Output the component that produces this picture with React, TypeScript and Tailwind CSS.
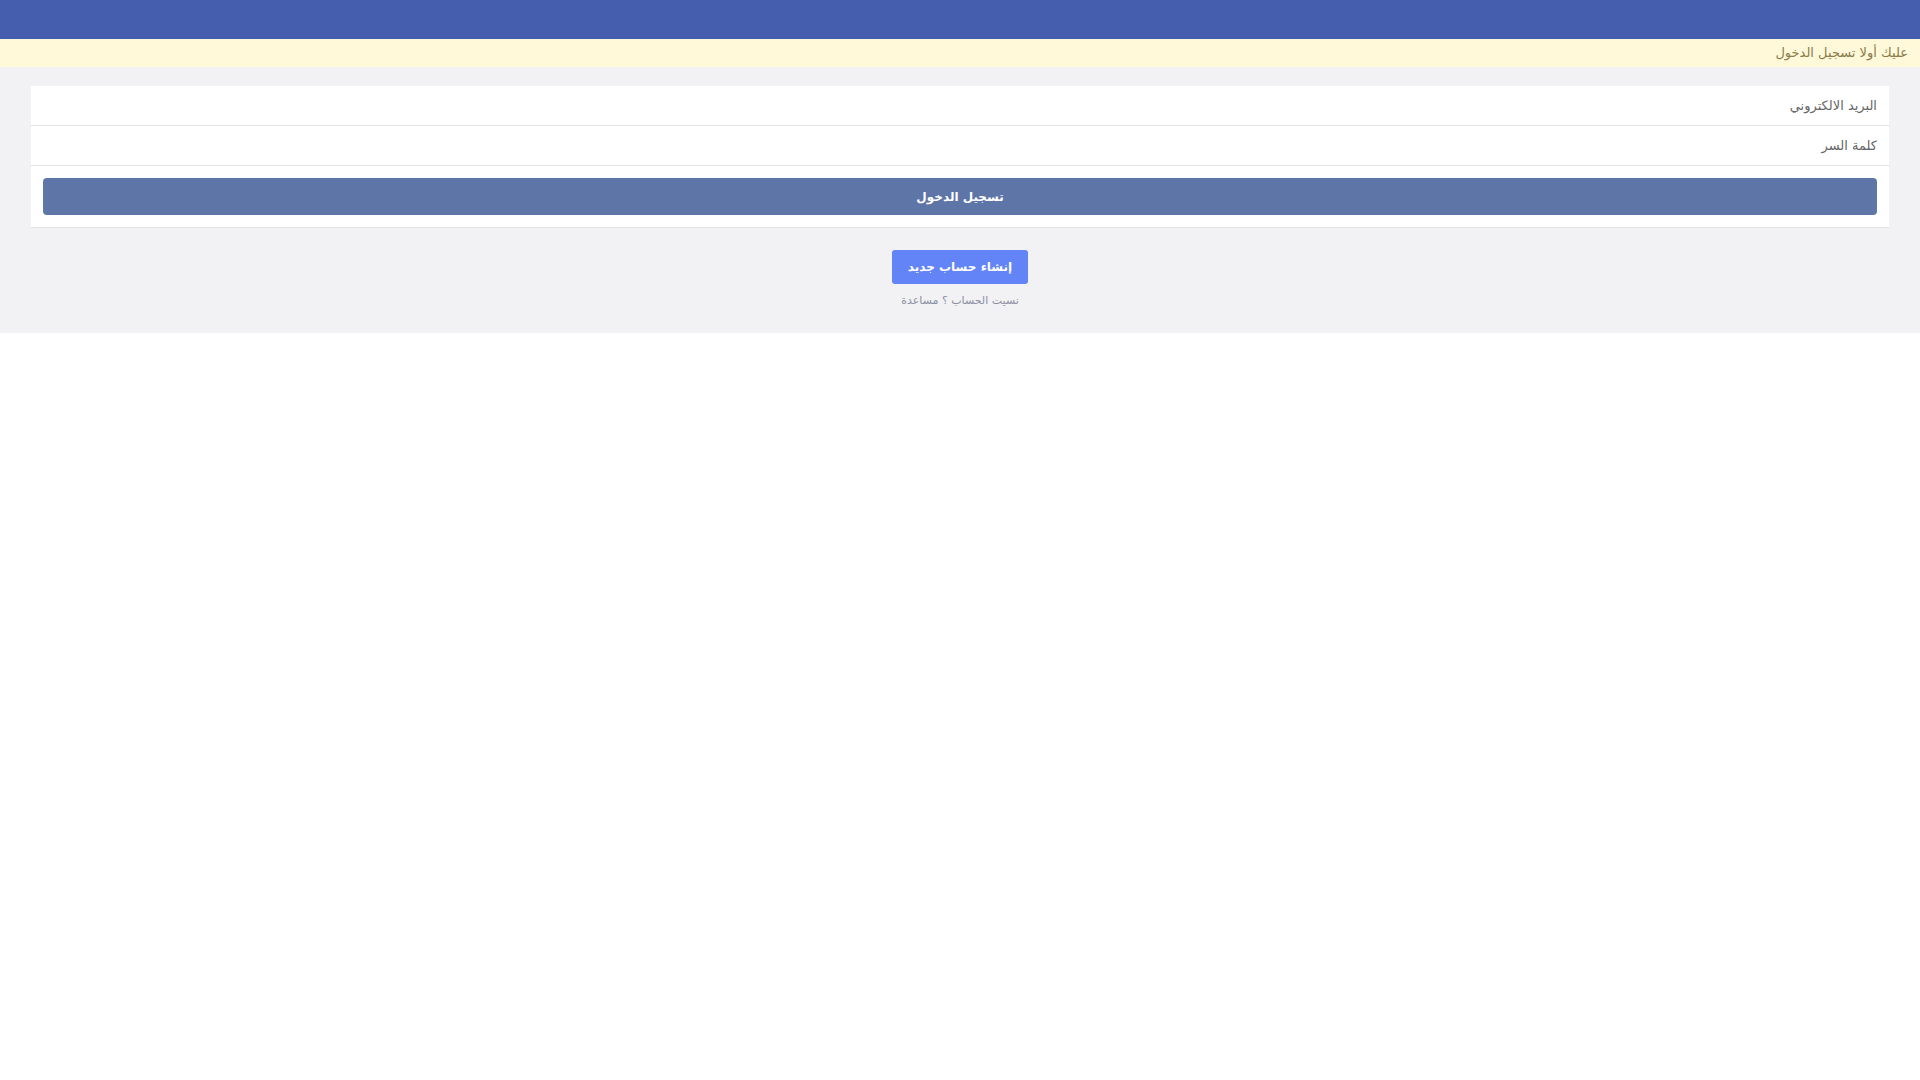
import React from "react";

export default function App() {
  return (
    <div dir="rtl" className="w-full" style={{ fontFamily: '"DejaVu Sans", "Noto Sans", sans-serif' }}>
      <div className="h-[39px] bg-[#465eae]" />
      <div className="h-[28px] bg-[#fff9d9] px-[12px] flex items-center text-[13px] text-[#8a7b4a]">
        عليك أولا تسجيل الدخول
      </div>
      <div className="bg-[#f2f2f4] pt-[19px] pb-[24px] px-[31px]">
        <div className="bg-white border-b border-[#e3e3e6]">
          <div className="h-[40px] px-[12px] flex items-center border-b border-[#e3e3e6] text-[13px] text-[#666666]">
            البريد الالكتروني
          </div>
          <div className="h-[40px] px-[12px] flex items-center border-b border-[#e3e3e6] text-[13px] text-[#666666]">
            كلمة السر
          </div>
          <div className="px-[12px] pt-[12px] pb-[12px]">
            <button className="w-full h-[37px] rounded-[4px] bg-[#5e75a8] text-white text-[12px] font-bold flex items-center justify-center">
              تسجيل الدخول
            </button>
          </div>
        </div>
        <div className="flex flex-col items-center pt-[22px]">
          <button className="w-[136px] h-[34px] rounded-[3px] bg-[#6284f6] text-white text-[12px] font-bold flex items-center justify-center">
            إنشاء حساب جديد
          </button>
          <div className="mt-[9px] text-[11px] text-[#8b8fa3] leading-[16px]">
            نسيت الحساب ؟ مساعدة
          </div>
        </div>
      </div>
    </div>
  );
}
